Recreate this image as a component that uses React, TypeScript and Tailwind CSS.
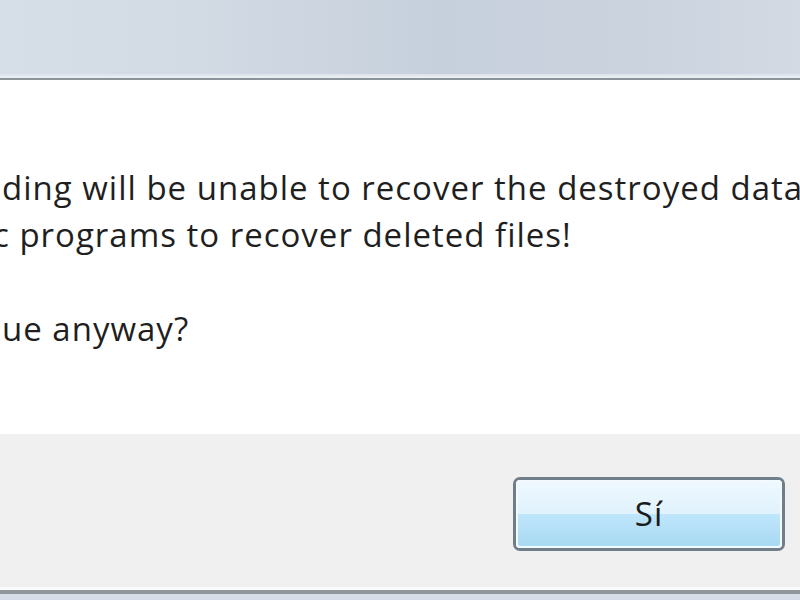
const lines = [
  { text: "ding will be unable to recover the destroyed data", shift: "ml-[2px]" },
  { text: "c programs to recover deleted files!", shift: "-ml-[7px]" },
];

const App = () => {
  return (
    <div className="w-[800px] h-[600px] overflow-hidden flex flex-col bg-white font-['Open_Sans','Noto_Sans',sans-serif]">
      <div className="h-[74px] bg-[linear-gradient(90deg,#d6dee8_0%,#d2dae4_25%,#c6d0dc_55%,#cbd3de_80%,#d3dae4_100%)]" />
      <div className="h-[6px] bg-[#e9eef3] border-t-[2px] border-b-[2px] border-t-[#dfe5ec] border-b-[#8c949b]" />
      <div className="h-[354px] bg-white overflow-hidden pt-[84px] text-[33px] tracking-[1px] leading-[47px] text-[#1f1f1f] whitespace-nowrap">
        {lines.map((line, idx) => (
          <div key={idx} className={line.shift}>
            {line.text}
          </div>
        ))}
        <div className="h-[47px]" />
        <div className="ml-[2px]">ue anyway?</div>
      </div>
      <div className="h-[153px] bg-[#f0f0f0] flex justify-end items-start pt-[43px] pr-[15px]">
        <button className="w-[272px] h-[74px] rounded-[7px] border-[3px] border-[#707e8a] p-0 bg-white">
          <div className="w-full h-full rounded-[4px] border-[2px] border-[#f2fafe] flex flex-col overflow-hidden relative">
            <div className="h-1/2 bg-[linear-gradient(180deg,#eef8fe,#e0f2fd)]" />
            <div className="h-1/2 bg-[linear-gradient(180deg,#bfe6fb,#a9d9f3)]" />
            <span className="absolute inset-0 flex items-center justify-center text-[33px] tracking-[1px] text-[#1b1b1b]">
              Sí
            </span>
          </div>
        </button>
      </div>
      <div className="h-[3px] bg-[#fafbfc]" />
      <div className="h-[4px] bg-[#8f969c]" />
      <div className="flex-1 bg-[#d6dde6]" />
    </div>
  );
};

export default App;
